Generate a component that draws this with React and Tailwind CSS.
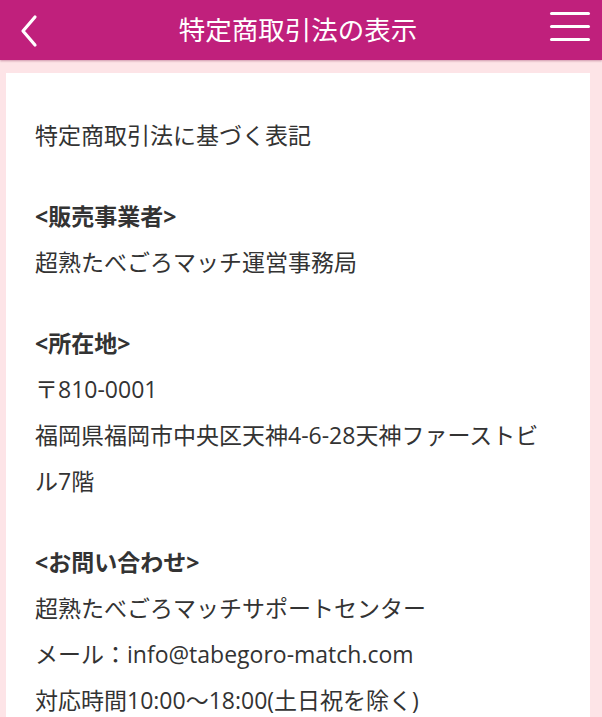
// App.jsx — 特定商取引法の表示 page

const sections = [
  { lines: ['特定商取引法に基づく表記'] },
  { title: '<販売事業者>', lines: ['超熟たべごろマッチ運営事務局'] },
  {
    title: '<所在地>',
    lines: ['〒810-0001', '福岡県福岡市中央区天神4-6-28天神ファーストビル7階'],
  },
  {
    title: '<お問い合わせ>',
    lines: [
      '超熟たべごろマッチサポートセンター',
      'メール：info@tabegoro-match.com',
      '対応時間10:00〜18:00(土日祝を除く)',
    ],
  },
];

export default function App() {
  return (
    <div
      className="min-h-[717px] bg-[#fde4e7] text-[#333333]"
      style={{ fontFamily: '"Open Sans", "Noto Sans CJK JP", sans-serif' }}
    >
      {/* Header */}
      <header className="relative flex h-[60px] items-center justify-center bg-[#c0207c] shadow-[0_1px_2px_rgba(120,0,60,0.35)]">
        <button className="absolute left-[14px] top-[10px] p-1 text-white">
          <svg width="22" height="34" viewBox="0 0 22 34" fill="none">
            <path d="M17 3 L5 17 L17 31" stroke="white" strokeWidth="3.2" strokeLinecap="round" strokeLinejoin="round" />
          </svg>
        </button>
        <h1 className="-ml-[6px] text-[26.5px] leading-none text-white">特定商取引法の表示</h1>
        <button className="absolute right-[12px] top-[12px] flex w-[40px] flex-col gap-[10px]">
          <span className="block h-[3px] w-full rounded-full bg-white" />
          <span className="block h-[3px] w-full rounded-full bg-white" />
          <span className="block h-[3px] w-full rounded-full bg-white" />
        </button>
      </header>

      {/* Card */}
      <main className="px-[6px] pt-[13px]">
        <div className="w-[584px] bg-white pl-[29px] pr-[30px] pt-[39px] pb-10 text-[23px] leading-[46px]">
          {sections.map((s, i) => (
            <div key={i} className={i === 0 ? '' : 'mt-[35px]'}>
              {s.title && <p className="font-bold">{s.title}</p>}
              {s.lines.map((line) => (
                <p key={line}>{line}</p>
              ))}
            </div>
          ))}
        </div>
      </main>
    </div>
  );
}
